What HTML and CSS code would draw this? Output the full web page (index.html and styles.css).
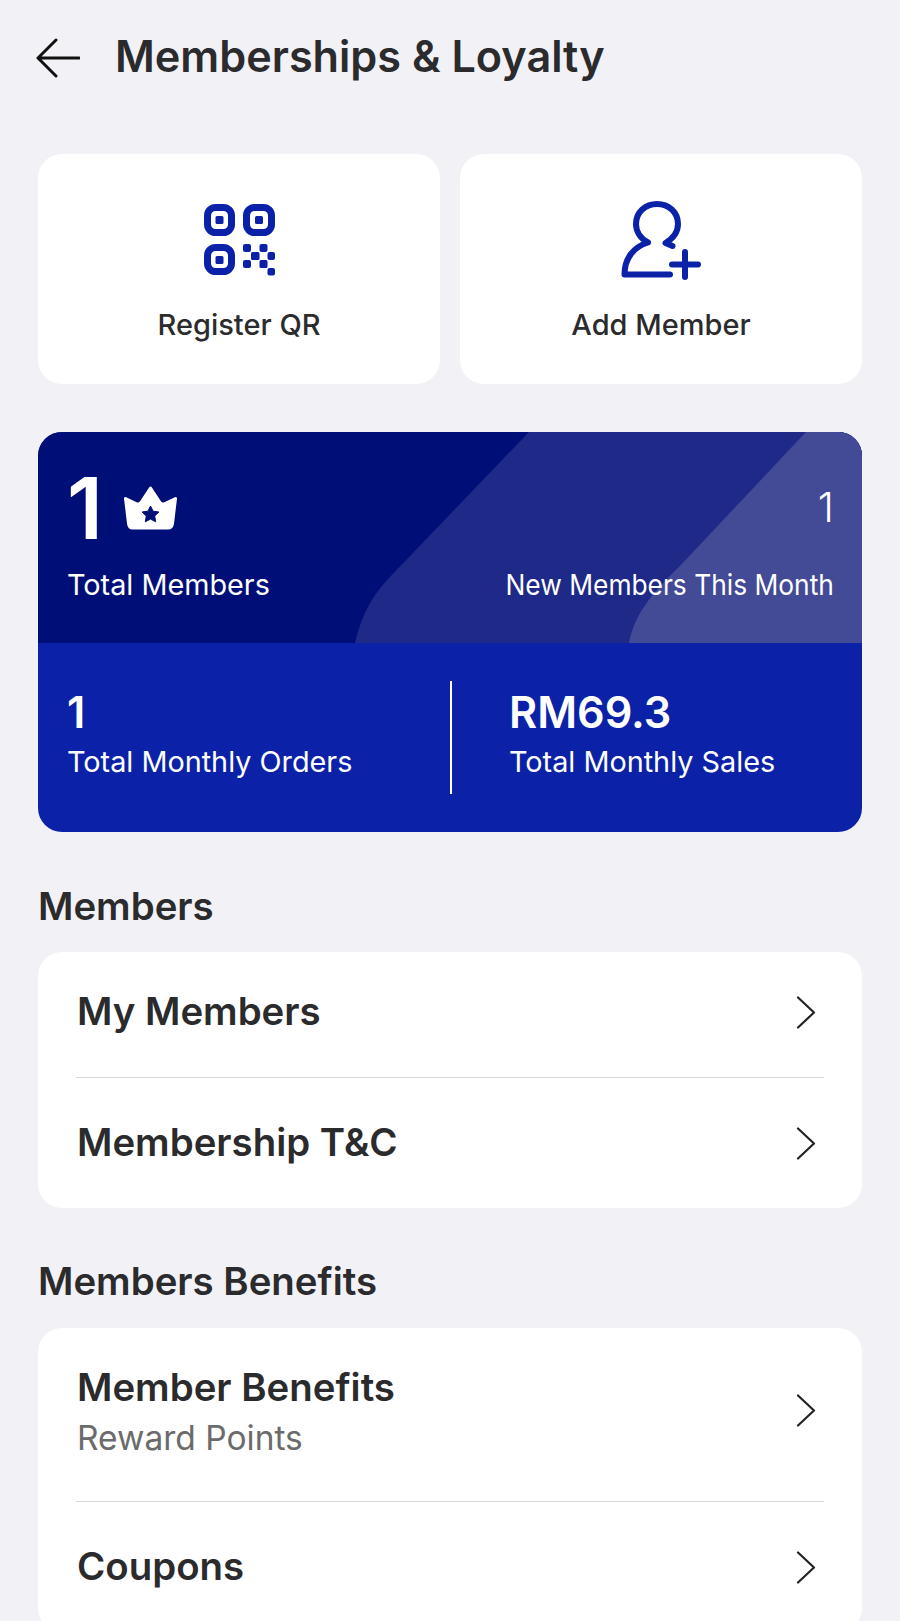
FILE: index.html
```html
<!DOCTYPE html>
<html lang="en">
<head>
<meta charset="utf-8">
<title>Memberships &amp; Loyalty</title>
<link rel="stylesheet" href="styles.css">
</head>
<body>
<main class="page">
  <header class="topbar">
    <svg class="back" viewBox="0 0 44 40" aria-hidden="true"><path d="M43 20H2M20 2 2 20l18 18"/></svg>
    <h1 class="title">Memberships &amp; Loyalty</h1>
  </header>

  <section class="quick">
    <a class="quick-card">
      <svg class="quick-icon" viewBox="0 0 100 100" aria-hidden="true">
        <g class="qr-frame"><rect x="18.500" y="16.500" width="24" height="25" rx="8"/><rect x="57.500" y="16.500" width="25" height="25" rx="8"/><rect x="18.500" y="56.500" width="24" height="24" rx="8"/></g>
        <g class="qr-fill"><rect x="26.500" y="25" width="8" height="8" rx="1.500"/><rect x="66" y="25" width="8" height="8" rx="1.500"/><rect x="26.500" y="65" width="8" height="8" rx="1.500"/>
        <rect x="54" y="53" width="8" height="8" rx="2"/><rect x="70.500" y="53" width="8" height="8" rx="2"/><rect x="62" y="61" width="8.500" height="8" rx="1.500"/><rect x="78.500" y="61" width="7.500" height="8" rx="2"/><rect x="54" y="69" width="8" height="8" rx="2"/><rect x="70.500" y="69" width="8" height="8" rx="1.500"/><rect x="78.500" y="77" width="7.500" height="7.500" rx="2"/></g>
      </svg>
      <span class="quick-label">Register QR</span>
    </a>
    <a class="quick-card">
      <svg class="quick-icon" viewBox="1 1 100 100" aria-hidden="true">
        <path class="person" d="M62.500 56 55.500 53C63 48.500 68 41.500 68 34 68 22 58.500 14 47 14S26 22 26 34C26 41.500 30.500 48.500 38 52.500 23 57 14.500 69 14.500 84.500H60M75 62V87M62 74.500H88"/>
      </svg>
      <span class="quick-label">Add Member</span>
    </a>
  </section>

  <section class="stats">
    <div class="stats-top">
      <svg class="stats-art" viewBox="0 0 824 211" preserveAspectRatio="none" aria-hidden="true">
        <path class="art-one" d="M491 0H824V211H317C322 190 330 168 350 147Z"/>
        <path class="art-two" d="M768 0H824V211H591C596 185 610 165 640 136Z"/>
      </svg>
      <div class="stat-main">
        <div class="big-row">
          <span class="big">1</span>
          <svg class="crown" viewBox="0 0 56 46" aria-hidden="true">
            <path class="crown-body" d="M27.500 3 37 17.500Q39 20 42 18.500L52.500 13.500 49.500 38.500Q49 43 45 43H10Q6 43 5.500 38.500L2.500 13.500 13 18.500Q16 20 18 17.500Z"/>
            <path class="crown-star" d="m27.500 21 2.600 5.200 5.800.8-4.200 4 1 5.800-5.200-2.700-5.200 2.700 1-5.800-4.200-4 5.800-.8Z"/>
          </svg>
        </div>
        <span class="stat-label">Total Members</span>
      </div>
      <div class="stat-new">
        <span class="new-value">1</span>
        <span class="stat-label stat-label-narrow">New Members This Month</span>
      </div>
    </div>
    <div class="stats-bottom">
      <div class="stat-cell">
        <span class="mid">1</span>
        <span class="stat-label">Total Monthly Orders</span>
      </div>
      <div class="stat-cell stat-cell-right">
        <span class="mid">RM69.3</span>
        <span class="stat-label">Total Monthly Sales</span>
      </div>
    </div>
  </section>

  <h2 class="section-title">Members</h2>
  <section class="list">
    <a class="row row-first">
      <span class="row-text"><span class="row-title">My Members</span></span>
      <svg class="chev" viewBox="0 0 20 33" aria-hidden="true"><path d="m2 1.500 16 15-16 15"/></svg>
    </a>
    <a class="row">
      <span class="row-text"><span class="row-title">Membership T&amp;C</span></span>
      <svg class="chev" viewBox="0 0 20 33" aria-hidden="true"><path d="m2 1.500 16 15-16 15"/></svg>
    </a>
  </section>

  <h2 class="section-title section-title-two">Members Benefits</h2>
  <section class="list">
    <a class="row row-tall">
      <span class="row-text"><span class="row-title">Member Benefits</span><span class="row-sub">Reward Points</span></span>
      <svg class="chev" viewBox="0 0 20 33" aria-hidden="true"><path d="m2 1.500 16 15-16 15"/></svg>
    </a>
    <a class="row">
      <span class="row-text"><span class="row-title">Coupons</span></span>
      <svg class="chev" viewBox="0 0 20 33" aria-hidden="true"><path d="m2 1.500 16 15-16 15"/></svg>
    </a>
  </section>
</main>
</body>
</html>
```

FILE: styles.css
```css
* { box-sizing: border-box; }
html, body { margin: 0; padding: 0; height: 100%; overflow: hidden; }
body { background: #f1f1f6; color: #2b2b2d; font-family: Inter, "Liberation Sans", sans-serif; }
.page { padding: 0 38px; }

.topbar { display: flex; align-items: center; height: 114px; gap: 35px; }
.back { width: 44px; height: 40px; margin: 2px 0 0 -2px; flex: none; fill: none; stroke: #111; stroke-width: 3; stroke-linecap: round; stroke-linejoin: round; }
.title { margin: 0; font-size: 43.2px; line-height: 1; font-weight: 600; }

.quick { display: grid; grid-template-columns: 1fr 1fr; gap: 20px; margin-top: 40px; }
.quick-card { background: #fff; border-radius: 24px; height: 230px; display: flex; flex-direction: column; align-items: center; padding-top: 37px; }
.quick-icon { width: 100px; height: 100px; flex: none; }
.quick-label { margin-top: 16px; font-size: 29px; line-height: 36px; font-weight: 500; }
.qr-frame rect { fill: none; stroke: #0b22a8; stroke-width: 7; }
.qr-fill rect { fill: #0b22a8; }
.person { fill: none; stroke: #0b22a8; stroke-width: 6; stroke-linecap: round; stroke-linejoin: round; }

.stats { margin-top: 48px; border-radius: 24px; overflow: hidden; background: #0b22a8; color: #fff; }
.stats-top { position: relative; height: 211px; background: #000f78; display: flex; justify-content: space-between; padding: 0 28px 0 29px; }
.stats-art { position: absolute; inset: 0; width: 100%; height: 100%; }
.art-one { fill: #1f2a88; }
.art-two { fill: #434a96; }
.stat-main, .stat-new { position: relative; display: flex; flex-direction: column; }
.stat-new { align-items: flex-end; }
.big-row { display: flex; align-items: center; height: 135px; padding-top: 19px; gap: 20px; }
.big { font-size: 85px; line-height: 90px; font-weight: 600; }
.crown { width: 56px; height: 46px; margin-bottom: 2px; }
.crown-body { fill: #fff; stroke: #fff; stroke-width: 3; stroke-linejoin: round; }
.crown-star { fill: #000f78; stroke: #000f78; stroke-width: 1; stroke-linejoin: round; }
.new-value { height: 135px; padding-top: 52px; font-size: 41px; line-height: 46px; font-weight: 300; }
.stat-label { font-size: 28.800px; line-height: 36px; font-weight: 400; white-space: nowrap; }
.stat-label-narrow { transform: scaleX(.915); transform-origin: right center; }

.stats-bottom { display: grid; grid-template-columns: 1fr 1fr; height: 189px; padding: 38px 0; }
.stat-cell { padding-left: 29px; display: flex; flex-direction: column; }
.stat-cell-right { border-left: 2px solid #fff; padding-left: 57px; }
.mid { font-size: 43.200px; line-height: 63px; font-weight: 600; }

.section-title { margin: 49px 0 0; font-size: 38.400px; line-height: 50px; font-weight: 600; }
.section-title-two { margin-top: 48px; line-height: 51px; }
.list { margin-top: 21px; background: #fff; border-radius: 24px; padding: 0 38px; }
.row { display: flex; align-items: center; justify-content: space-between; height: 125px; }
.row + .row { border-top: 1px solid #d9d9dc; height: 131px; }
.row + .row .row-text { margin-bottom: 2px; }
.row-first .row-text { margin-bottom: 7px; }
.row-first .chev { margin-bottom: 4px; }
.row-tall { height: 173px; padding-top: 4px; padding-bottom: 12px; }
.row-text { display: flex; flex-direction: column; padding-left: 1px; }
.row-title { font-size: 38.400px; line-height: 50px; font-weight: 600; }
.row-sub { font-size: 33.500px; line-height: 42px; color: #6b6b6b; margin-top: 5px; }
.chev { width: 20px; height: 33px; margin-right: 8px; flex: none; fill: none; stroke: #222; stroke-width: 2.200; stroke-linecap: round; stroke-linejoin: round; }
```
